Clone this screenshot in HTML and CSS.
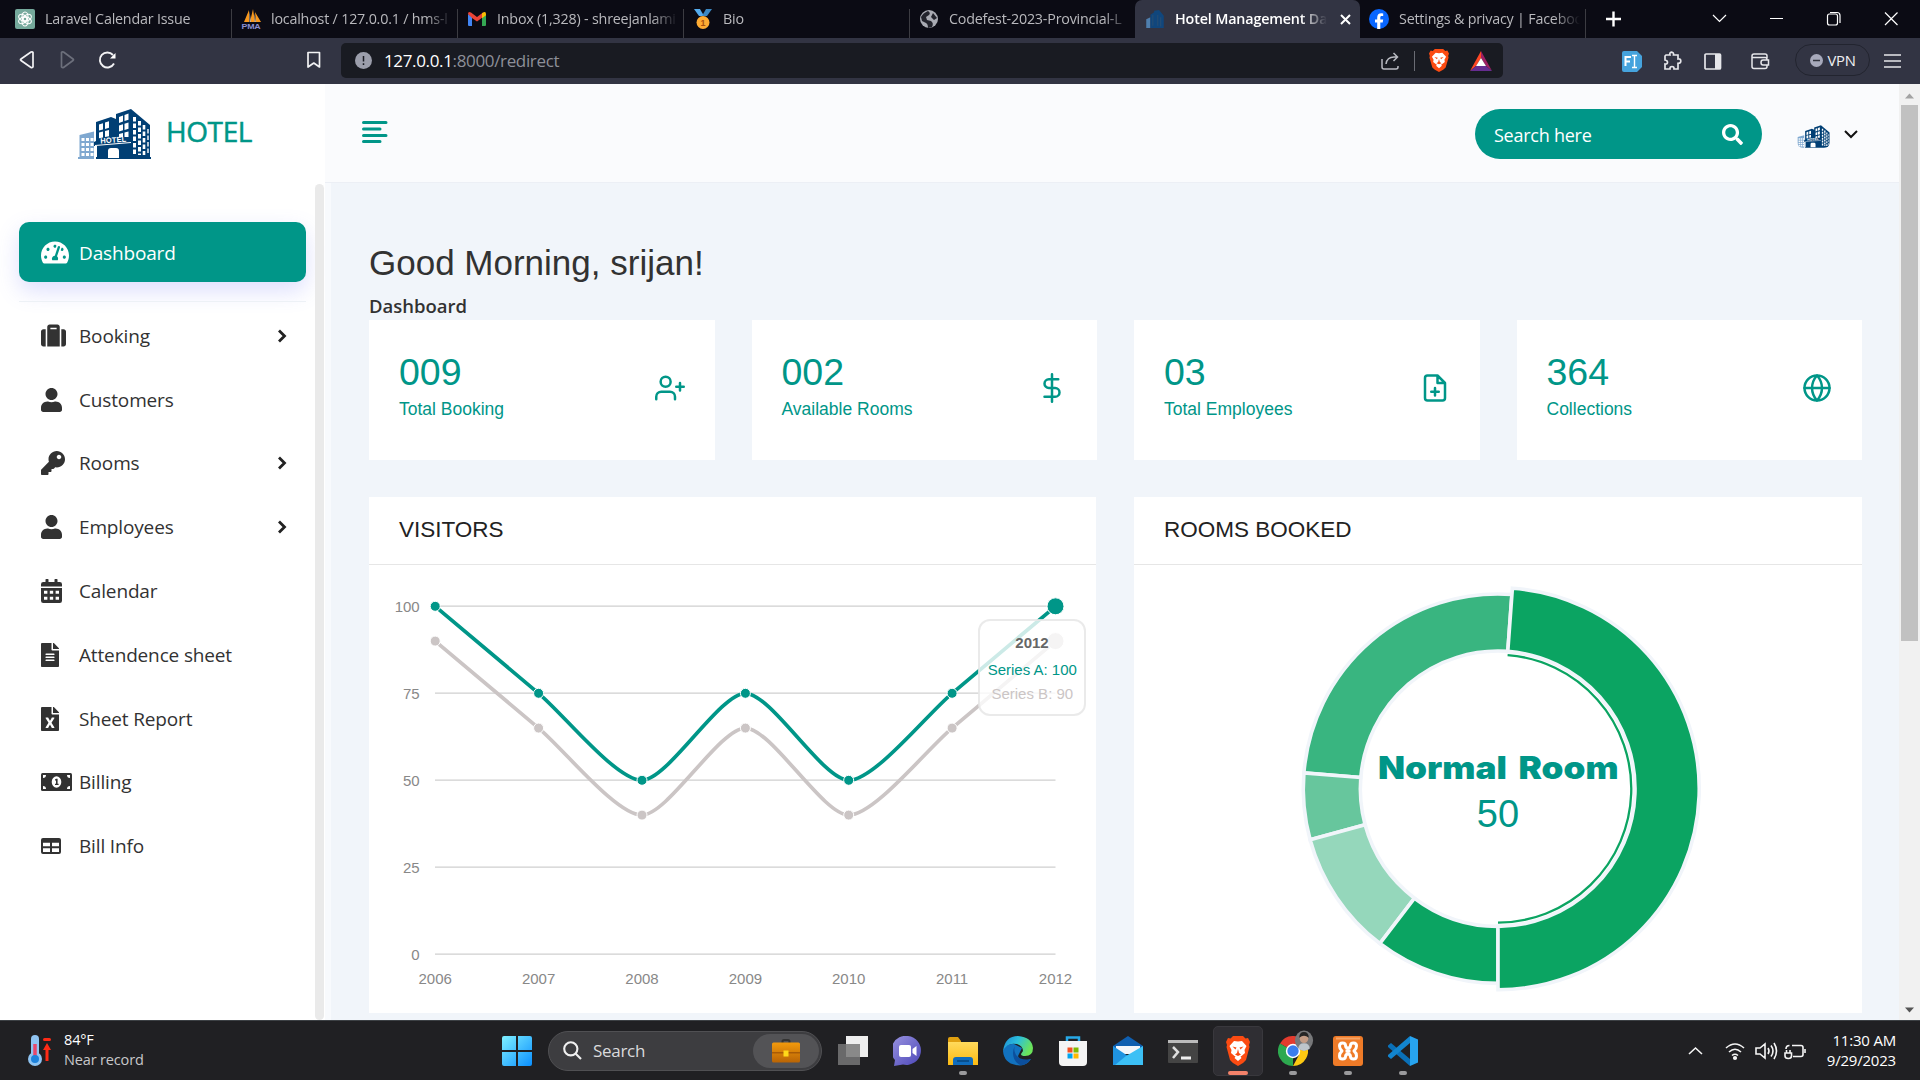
FILE: index.html
```html
<!DOCTYPE html>
<html lang="en">
<head>
<meta charset="utf-8">
<title>Hotel Management Dashboard</title>
<link rel="stylesheet" href="styles.css">
</head>
<body>
<svg class="defs" width="0" height="0">
  <defs>
    <symbol id="hotel" viewBox="0 0 73 50">
      <path fill="#7fa8d0" d="M0 48h16v2H0zM1.500 26 16 22.500V49H1.500z"/>
      <path fill="#fff" d="M3.500 29h3v3h-3zm4.500 0h3v3H8zm4.500 0h3v3h-3zM3.500 34h3v3h-3zM8 34h3v3H8zm4.500 0h3v3h-3zM3.500 39h3v3h-3zM8 39h3v3H8zm4.500 0h3v3h-3zM3.500 44h3v3h-3zM8 44h3v3H8zm4.500 0h3v3h-3z"/>
      <path fill="#013f74" d="M18 48h55v2H18zM18 13 33 8l5 2V5L53 0l19 16v33H19V37h-3v-4l2-1z"/>
      <path fill="#fff" d="M21 15.500l4-1.300v6.300l-4 1zM27 13.500l4-1.300v6.500l-4 1.200zM21 23.500l4-1v6l-4 .8zM27 22l4-1v6.200l-4 .8zM41 8l4-1.500v6L41 14zM46.500 6l4-1.500v6.300l-4 1.300zM41 16.500l4-1.300v6L41 22.500zM46.500 14.700l4-1.300v6.400l-4 1.200zM41 25l4-1v4l-4 .5zM46.500 23.500l4-1V28h-4zM30 49v-7q0-3 3-3h5q3 0 3 3v7z"/>
      <path stroke="#fff" stroke-width="3" stroke-dasharray="4.500 2" d="M56.500 8v38M61.500 12v34"/><path stroke="#fff" stroke-width="2.600" stroke-dasharray="4.500 2" d="M66 16v30"/><path stroke="#fff" stroke-width="1.400" d="M70 20v26" stroke-dasharray="4.500 2"/>
      <path stroke="#fff" stroke-width="1" d="M17 36.500 53 33.500"/>
      <text x="22.500" y="34.500" transform="rotate(-4 22 35)" font-family="Liberation Sans, Arial, sans-serif" font-weight="700" font-size="7.500" textLength="26" fill="#fff">HOTEL</text>
    </symbol>
    <symbol id="brave" viewBox="0 0 24 30">
      <path fill="#fb4b12" d="M7 0h10l2.500 2.500L22 2l2 4-1 3 .5 2L20 24l-3 3-5 3-5-3-3-3L.5 11 1 9 0 6l2-4 2.500.5z"/>
      <path fill="#fff" d="M12 5.500 16 5l4.500 5-2 4 .500 3-3.500 3-1 .5 1 1.500L12 25l-3.500-3 1-1.500-1-.5L5 17l.5-3-2-4L8 5z"/>
      <path fill="#fb4b12" d="m6.500 10.500 4 1-1 2zm11 0-4 1 1 2zM12 13l1 4 2 1.500-3 1.500-3-1.500 2-1.500z"/>
    </symbol>
    <symbol id="user" viewBox="0 0 448 512"><path d="M224 256c70.700 0 128-57.300 128-128S294.700 0 224 0 96 57.300 96 128s57.300 128 128 128zm89.600 32h-16.700c-22.200 10.200-46.900 16-72.900 16s-50.600-5.800-72.900-16h-16.700C60.200 288 0 348.200 0 422.400V464c0 26.500 21.500 48 48 48h352c26.500 0 48-21.500 48-48v-41.600c0-74.200-60.200-134.400-134.400-134.400z"/></symbol>
    <symbol id="chev" viewBox="0 0 10 14"><path d="m2 1.500 5.500 5.500L2 12.500" fill="none" stroke="#222" stroke-width="2.800"/></symbol>
    <linearGradient id="win" x2="1" y2="1"><stop stop-color="#7ff0ff"/><stop offset="1" stop-color="#0a8fff"/></linearGradient>
    <linearGradient id="edge" x2="1" y2="0.400"><stop stop-color="#1b87d6"/><stop offset="0.500" stop-color="#2cc0dc"/><stop offset="1" stop-color="#6be35a"/></linearGradient>
    <linearGradient id="purple" x2="1" y2="1"><stop stop-color="#9a94e0"/><stop offset="1" stop-color="#4b46b8"/></linearGradient>
    <linearGradient id="fold" y2="1" x2="0"><stop stop-color="#ffda5c"/><stop offset="1" stop-color="#fcba12"/></linearGradient>
    <linearGradient id="case" y2="1" x2="0"><stop stop-color="#f29a0c"/><stop offset="1" stop-color="#b96405"/></linearGradient>
  </defs>
</svg>

<div class="tabs">
  <div class="tab"><svg width="20" height="20" viewBox="0 0 20 20"><rect width="20" height="20" rx="2" fill="#75a99c"/><g fill="none" stroke="#fff" stroke-width="1.100"><ellipse cx="10" cy="7.500" rx="3" ry="4.500"/><ellipse cx="10" cy="7.500" rx="3" ry="4.500" transform="rotate(60 10 10)"/><ellipse cx="10" cy="7.500" rx="3" ry="4.500" transform="rotate(120 10 10)"/><ellipse cx="10" cy="7.500" rx="3" ry="4.500" transform="rotate(180 10 10)"/><ellipse cx="10" cy="7.500" rx="3" ry="4.500" transform="rotate(240 10 10)"/><ellipse cx="10" cy="7.500" rx="3" ry="4.500" transform="rotate(300 10 10)"/></g></svg><span>Laravel Calendar Issue</span></div>
  <div class="tab"><svg width="20" height="20" viewBox="0 0 20 20"><path fill="#f8981d" d="M8 1 3 13h5zM12 0 9 13h5zM14 3l1 10h5z"/><path fill="#cbb9a5" d="M8.500 2v11H10zM13.500 4v9h1.500z"/><text x="0.500" y="19.500" font-family="Liberation Sans, Arial, sans-serif" font-weight="700" font-size="8" textLength="19" lengthAdjust="spacingAndGlyphs" fill="#8a8fd0">PMA</text></svg><span>localhost / 127.0.0.1 / hms-l</span></div>
  <div class="tab"><svg width="20" height="20" viewBox="0 0 20 20"><path fill="#4285f4" d="M1 5l4 3v9H2q-1 0-1-1z"/><path fill="#34a853" d="M15 8l4-3v11q0 1-1 1h-3z"/><path fill="#ea4335" d="M1 5q0-3 3-1.500l6 4.500 6-4.500V8l-6 4.500L5 9z"/><path fill="#fbbc04" d="M15 4.200q4-3 4 1v1l-4 3z"/></svg><span>Inbox (1,328) - shreejanlami</span></div>
  <div class="tab"><svg width="20" height="20" viewBox="0 0 20 20"><path fill="#55acee" d="M1 0h6l4 7H6z"/><path fill="#3b88c3" d="M13 0h6l-5 7H9z"/><circle cx="10" cy="13.500" r="6.500" fill="#ffac33"/><text x="10" y="17" text-anchor="middle" font-family="Liberation Sans, Arial, sans-serif" font-weight="700" font-size="9" fill="#a8500f">1</text></svg><span>Bio</span></div>
  <div class="tab"><svg width="20" height="20" viewBox="0 0 20 20"><circle cx="10" cy="10" r="9" fill="#a9abb3"/><path fill="#0b0b14" d="M2 8q2-4 7-6 3 2 1 4L7 8l1 3 4 1q3 2 1 6l-4 1q0-4-2-5l-4-2zM14 4l4 5-3 2-3-3z" opacity=".85"/></svg><span>Codefest-2023-Provincial-L</span></div>
  <div class="tab active"><svg width="18" height="18" viewBox="0 0 73 50" preserveAspectRatio="none"><path fill="#4f7fae" d="M1 26 18 20v30H1z"/><path fill="#10467c" d="M18 13 33 6V2L53 0l19 16v34H18z"/><path stroke="#32516f" stroke-width="3" d="M28 14v30M48 14v30M60 20v26"/></svg><span>Hotel Management Da</span><svg class="x" width="11" height="11" viewBox="0 0 11 11"><path d="m1 1 9 9m0-9-9 9" stroke="#fff" stroke-width="2"/></svg></div>
  <div class="tab"><svg width="20" height="20" viewBox="0 0 20 20"><circle cx="10" cy="10" r="10" fill="#0866ff"/><path fill="#fff" d="M8.200 20v-6.500H6v-3h2.200V8.700c0-3 1.500-4.400 4.200-4.400l1.800.2v2.600h-1.400c-1.200 0-1.500.6-1.500 1.500v1.900h2.900l-.5 3h-2.400V20z"/></svg><span>Settings &amp; privacy | Facebook</span></div>
  <svg class="wctl" width="334" height="38" viewBox="1586 0 334 38" fill="none" stroke="#fff"><path d="M1606 19h15M1613.500 11.500v15" stroke-width="2.400"/><path d="m1713 15 6.500 6.500L1726 15M1770 18.500h13M1885 12.500l12.500 12.500m0-12.500L1885 25" stroke-width="1.200"/><rect x="1827.500" y="14" width="10" height="11" rx="2" stroke-width="1.200"/><path d="M1830 12.500h7q3 0 3 3V23" stroke-width="1.200"/></svg>
</div>

<div class="toolbar">
  <svg width="341" height="46" viewBox="0 38 341 46" fill="none" stroke="#f2f2f4" stroke-width="1.700" stroke-linejoin="round"><path d="M33 52.500v14.500q-1 1-2 .5L21 60.500q-1-1 0-1.500l10-7q1.500-.5 2 .5z"/><path stroke="#6c6f7b" d="M61.500 52.500v14.500q1 1 2 .5l9.500-7q1-.7 0-1.500l-9.500-7q-1.500-.5-2 .5z"/><path d="M114 63.500a7.500 7.500 0 1 1-1-8.500" stroke-width="1.900"/><path d="M110 58.500h5.500V53z" fill="#fff" stroke="none"/><path d="M308 52.500h11.500V67l-5.700-4-5.800 4z"/></svg>
  <div class="url">
    <svg width="17" height="17" viewBox="0 0 17 17"><circle cx="8.500" cy="8.500" r="8.500" fill="#9b9eab"/><path d="M8.500 4v5.500m0 1.800v1.700" stroke="#191b22" stroke-width="1.500"/></svg>
    <span class="addr"><b>127.0.0.1</b>:8000/redirect</span>
    <svg width="18" height="18" viewBox="0 0 18 18" fill="none" stroke="#b9bbc2" stroke-width="1.500"><path d="M1 7v8q0 2 2 2h12q2 0 2-2v-1M5 12q1-7 8-7h3M12.500 1l4 4-4 4"/></svg>
    <i></i>
    <svg width="20" height="23" viewBox="0 0 24 30" preserveAspectRatio="none"><use href="#brave" width="24" height="30"/></svg>
    <svg class="bat" width="22" height="20" viewBox="0 0 22 20"><path fill="#ff4724" d="M11 0v7l-5 8-6 5z"/><path fill="#9e1f63" d="m11 0 11 20-6-5-5-8z"/><path fill="#662d91" d="m0 20 6-5h10l6 5z"/><path fill="#fff" d="m11 7 5 8H6z"/></svg>
  </div>
  <div class="ext">
    <svg width="20" height="21" viewBox="0 0 20 21"><path fill="#46a3dd" d="M2 0h13l5 5v11l-5 5H2q-2 0-2-2V2q0-2 2-2z"/><path d="M3.500 15V6H9M3.500 10.500H8" stroke="#fff" stroke-width="2" fill="none"/><path d="M10 4.500h5M10 16.500h5M12.500 4.500v12" stroke="#fff" stroke-width="1.400"/></svg>
    <svg width="20" height="20" viewBox="0 0 20 20" fill="none" stroke="#e6e6ea" stroke-width="1.700"><path d="M3 4h4q-.8-2.500 1.500-2.800Q11 1.500 10.500 4H15v4q2.800-.4 2.800 2T15 12.300V18h-4q.2-2.500-2-2.500T7 18H2v-5q2.500.2 2.500-1.700T2 9V5z"/></svg>
    <svg width="18" height="17" viewBox="0 0 18 17"><rect x="1" y="1" width="15.500" height="15" rx="1" fill="none" stroke="#e6e6ea" stroke-width="1.700"/><path fill="#e6e6ea" d="M11 1h6v15h-6z"/></svg>
    <svg class="wal" width="19" height="17" viewBox="0 0 19 17" fill="none" stroke="#e6e6ea" stroke-width="1.500"><path d="M16 5V3q0-2-2-2H3Q1 1 1 3v10.500q0 2 2 2h11q2 0 2-2V12M1 4.500h13q2 0 2 2M17.500 7v5H12q-2 0-2-2.500T12 7z"/></svg>
    <div class="vpn"><svg width="13" height="13" viewBox="0 0 13 13"><circle cx="6.500" cy="6.500" r="6.500" fill="#a7a9bb"/><path d="M3 6.500h7" stroke="#32343f" stroke-width="1.500"/></svg>VPN</div>
    <svg width="17" height="14" viewBox="0 0 17 14"><path d="M0 1h17M0 7h17M0 13h17" stroke="#e6e6ea" stroke-width="1.500"/></svg>
  </div>
</div>

<div class="page">
  <aside>
    <div class="brand"><svg width="73" height="50"><use href="#hotel"/></svg><span>HOTEL</span></div>
    <div class="side">
      <nav>
        <a class="on"><svg width="28" height="25" viewBox="0 0 576 512" fill="#fff"><path d="M288 32C128.940 32 0 160.940 0 320c0 52.800 14.250 102.260 39.060 144.800 5.610 9.620 16.300 15.200 27.440 15.200h443c11.140 0 21.830-5.580 27.440-15.200C561.750 422.260 576 372.800 576 320c0-159.060-128.940-288-288-288zm0 64c14.710 0 26.580 10.130 30.320 23.650-1.110 2.260-2.640 4.230-3.450 6.670l-9.220 27.670c-5.130 3.490-10.970 6.010-17.640 6.010-17.670 0-32-14.330-32-32S270.330 96 288 96zM96 384c-17.670 0-32-14.330-32-32s14.330-32 32-32 32 14.330 32 32-14.330 32-32 32zm48-160c-17.670 0-32-14.330-32-32s14.330-32 32-32 32 14.330 32 32-14.330 32-32 32zm246.770-72.410l-61.330 184C343.130 347.330 352 364.540 352 384c0 11.720-3.380 22.550-8.880 32H232.880c-5.500-9.450-8.880-20.280-8.880-32 0-33.940 26.500-61.430 59.900-63.590l61.340-184.010c4.170-12.560 17.730-19.450 30.360-15.170 12.570 4.190 19.350 17.790 15.170 30.360zm14.660 57.200l15.520-46.550c3.470-1.290 7.130-2.230 11.050-2.230 17.670 0 32 14.330 32 32s-14.330 32-32 32c-11.380-.01-20.890-6.280-26.570-15.220zM480 384c-17.670 0-32-14.330-32-32s14.330-32 32-32 32 14.330 32 32-14.330 32-32 32z"/></svg><span>Dashboard</span></a>
        <hr>
        <a><svg width="25" height="25" viewBox="0 0 512 512"><path d="M128 480h256V80c0-26.500-21.500-48-48-48H176c-26.500 0-48 21.500-48 48v400zm64-384h128v32H192V96zm320 80v256c0 26.500-21.500 48-48 48h-48V128h48c26.500 0 48 21.500 48 48zM96 480H48c-26.500 0-48-21.500-48-48V176c0-26.500 21.500-48 48-48h48v352z"/></svg><span>Booking</span><svg width="10" height="14"><use href="#chev"/></svg></a>
        <a><svg width="21" height="24"><use href="#user"/></svg><span>Customers</span></a>
        <a><svg width="24" height="24" viewBox="0 0 512 512"><path d="M512 176.001C512 273.203 433.202 352 336 352c-11.220 0-22.190-1.062-32.827-3.069l-24.012 27.014A23.999 23.999 0 0 1 261.223 384H224v40c0 13.255-10.745 24-24 24h-40v40c0 13.255-10.745 24-24 24H24c-13.255 0-24-10.745-24-24v-78.059c0-6.365 2.529-12.470 7.029-16.971l161.802-161.802C163.108 213.814 160 195.271 160 176 160 78.798 238.797.001 335.999 0 433.488-.001 512 78.511 512 176.001zM336 128c0 26.510 21.490 48 48 48s48-21.490 48-48-21.490-48-48-48-48 21.490-48 48z"/></svg><span>Rooms</span><svg width="10" height="14"><use href="#chev"/></svg></a>
        <a><svg width="21" height="24"><use href="#user"/></svg><span>Employees</span><svg width="10" height="14"><use href="#chev"/></svg></a>
        <a><svg width="21" height="24" viewBox="0 0 448 512"><path fill-rule="evenodd" d="M0 464q0 48 48 48h352q48 0 48-48V192H0zM64 250h72v64H64zm124 0h72v64h-72zm124 0h72v64h-72zM64 378h72v64H64zm124 0h72v64h-72zm124 0h72v64h-72zM448 160H0v-48q0-48 48-48h48V12q0-12 12-12h40q12 0 12 12v52h128V12q0-12 12-12h40q12 0 12 12v52h48q48 0 48 48z"/></svg><span>Calendar</span></a>
        <a><svg width="18" height="24" viewBox="0 0 384 512"><path d="M224 136V0H24C10.700 0 0 10.700 0 24v464c0 13.300 10.700 24 24 24h336c13.300 0 24-10.700 24-24V160H248c-13.200 0-24-10.800-24-24zm64 236c0 6.600-5.400 12-12 12H108c-6.600 0-12-5.400-12-12v-8c0-6.600 5.400-12 12-12h168c6.600 0 12 5.400 12 12v8zm0-64c0 6.600-5.400 12-12 12H108c-6.600 0-12-5.400-12-12v-8c0-6.600 5.400-12 12-12h168c6.600 0 12 5.400 12 12v8zm0-72v8c0 6.600-5.400 12-12 12H108c-6.600 0-12-5.400-12-12v-8c0-6.600 5.400-12 12-12h168c6.600 0 12 5.400 12 12zm96-114.100v6.100H256V0h6.100c6.400 0 12.500 2.500 17 7l97.900 98c4.500 4.500 7 10.600 7 16.900z"/></svg><span>Attendence sheet</span></a>
        <a><svg width="18" height="24" viewBox="0 0 384 512"><path d="M224 136V0H24C10.700 0 0 10.700 0 24v464c0 13.300 10.700 24 24 24h336c13.300 0 24-10.700 24-24V160H248c-13.200 0-24-10.800-24-24zm60.100 106.500L224 336l60.100 93.500c5.100 8-.6 18.500-10.100 18.500h-34.900c-4.400 0-8.500-2.400-10.600-6.300C208.900 405.500 192 373 192 373c-6.400 14.800-10 20-36.600 68.800-2.100 3.900-6.100 6.300-10.500 6.300H110c-9.500 0-15.200-10.500-10.100-18.500l60.300-93.500-60.300-93.500c-5.200-8 .6-18.500 10.100-18.500h34.800c4.400 0 8.500 2.400 10.600 6.300 26.100 48.800 20 33.600 36.600 68.500 0 0 6.100-11.700 36.600-68.500 2.100-3.900 6.200-6.300 10.600-6.300H274c9.500-.1 15.200 10.400 10.100 18.400zM384 121.900v6.100H256V0h6.100c6.400 0 12.500 2.500 17 7l97.900 98c4.500 4.500 7 10.600 7 16.900z"/></svg><span>Sheet Report</span></a>
        <a><svg width="31" height="18" viewBox="0 0 31 18"><rect width="31" height="18" rx="1.500"/><ellipse cx="15.500" cy="9" rx="4.800" ry="5.800" fill="#fff"/><path d="M14 6.500l1-.7h1.600v5h1V12H14v-1.200h1V7.500h-1z"/><path fill="#fff" d="M2 2h3q0 3-3 3zM29 2h-3q0 3 3 3zM2 16h3q0-3-3-3zM29 16h-3q0-3 3-3z"/></svg><span>Billing</span></a>
        <a><svg width="20" height="16" viewBox="0 0 20 16"><path fill-rule="evenodd" d="M2 0h16q2 0 2 2v12q0 2-2 2H2q-2 0-2-2V2q0-2 2-2zm0 4.700v3.500h7V4.700zm9 0v3.500h7V4.700zM2 10.300V14h7v-3.700zm9 0V14h7v-3.700z"/></svg><span>Bill Info</span></a>
      </nav>
      <div class="thumb"></div>
    </div>
  </aside>
  <div class="main">
    <header>
      <svg width="26" height="24" viewBox="0 0 26 24"><path d="M1.500 2.500H24M1.500 9H18M1.500 15.500H24M1.500 21.500H18" stroke="#009688" stroke-width="3" stroke-linecap="round"/></svg>
      <div class="find"><span>Search here</span><svg width="21" height="21" viewBox="0 0 512 512" fill="#fff"><path d="M505 442.700L405.300 343c-4.500-4.500-10.600-7-17-7H372c27.600-35.300 44-79.700 44-128C416 93.100 322.900 0 208 0S0 93.100 0 208s93.100 208 208 208c48.300 0 92.700-16.400 128-44v16.300c0 6.400 2.500 12.500 7 17l99.700 99.700c9.400 9.400 24.600 9.400 33.900 0l28.300-28.300c9.400-9.400 9.400-24.600.1-34zM208 336c-70.700 0-128-57.200-128-128 0-70.700 57.200-128 128-128 70.700 0 128 57.200 128 128 0 70.700-57.200 128-128 128z"/></svg></div>
      <svg class="ava" width="33" height="23"><use href="#hotel"/></svg>
      <svg class="down" width="14" height="9" viewBox="0 0 14 9"><path d="m1 1 6 6 6-6" fill="none" stroke="#111" stroke-width="2"/></svg>
    </header>
    <div class="content">
      <h1>Good Morning, srijan!</h1>
      <h2>Dashboard</h2>
      <div class="stats">
        <div class="card"><div><strong>009</strong><small>Total Booking</small></div><svg viewBox="0 0 24 24"><path d="M16 21v-2a4 4 0 0 0-4-4H5a4 4 0 0 0-4 4v2"/><circle cx="8.500" cy="7" r="4"/><path d="M20 8v6M23 11h-6"/></svg></div>
        <div class="card"><div><strong>002</strong><small>Available Rooms</small></div><svg viewBox="0 0 24 24"><path d="M12 1v22M17 5H9.500a3.500 3.500 0 0 0 0 7h5a3.500 3.500 0 0 1 0 7H6"/></svg></div>
        <div class="card"><div><strong>03</strong><small>Total Employees</small></div><svg viewBox="0 0 24 24"><path d="M14 2H6a2 2 0 0 0-2 2v16a2 2 0 0 0 2 2h12a2 2 0 0 0 2-2V8zM14 2v6h6M12 18v-6M9 15h6"/></svg></div>
        <div class="card"><div><strong>364</strong><small>Collections</small></div><svg viewBox="0 0 24 24"><circle cx="12" cy="12" r="10"/><path d="M2 12h20M12 2a15.300 15.300 0 0 1 4 10 15.300 15.300 0 0 1-4 10 15.300 15.300 0 0 1-4-10 15.300 15.300 0 0 1 4-10z"/></svg></div>
      </div>
      <div class="charts">
        <section><h3>VISITORS</h3>
          <svg width="727" height="448" viewBox="369 565 727 448">
            <path d="M435 606.200h620.500M435 693.200h620.500M435 780.200h620.500M435 867.200h620.500M435 954.200h620.500" stroke="#cfcfcf" stroke-width="1.300"/>
            <g class="ax end"><text x="419.700" y="612">100</text><text x="419.700" y="699">75</text><text x="419.700" y="786">50</text><text x="419.700" y="873">25</text><text x="419.700" y="960">0</text></g>
            <g class="ax mid"><text x="435.200" y="984">2006</text><text x="538.600" y="984">2007</text><text x="642" y="984">2008</text><text x="745.400" y="984">2009</text><text x="848.700" y="984">2010</text><text x="952.100" y="984">2011</text><text x="1055.500" y="984">2012</text></g>
            <path class="ln" stroke="#cbc5c5" d="M435.200 641.100 538.600 728.100C564.450 749.850 616.150 815.100 642 815.100S719.550 728.100 745.400 728.100 822.850 815.100 848.700 815.100 926.250 749.850 952.100 728.100L1055.500 641.100"/>
            <path class="ln" stroke="#009688" d="M435.200 606.300 538.600 693.300C564.450 715.050 616.150 780.300 642 780.300S719.550 693.300 745.400 693.300 822.850 780.300 848.700 780.300 926.250 715.050 952.100 693.300L1055.500 606.300"/>
            <g fill="#cbc5c5" stroke="#fff"><circle cx="435.200" cy="641.100" r="5"/><circle cx="538.600" cy="728.100" r="5"/><circle cx="642" cy="815.100" r="5"/><circle cx="745.400" cy="728.100" r="5"/><circle cx="848.700" cy="815.100" r="5"/><circle cx="952.100" cy="728.100" r="5"/><circle cx="1055.500" cy="641.100" r="8.500"/></g>
            <g fill="#009688" stroke="#fff"><circle cx="435.200" cy="606.300" r="5"/><circle cx="538.600" cy="693.300" r="5"/><circle cx="642" cy="780.300" r="5"/><circle cx="745.400" cy="693.300" r="5"/><circle cx="848.700" cy="780.300" r="5"/><circle cx="952.100" cy="693.300" r="5"/><circle cx="1055.500" cy="606.300" r="8.500"/></g>
            <rect x="979" y="620" width="106" height="95" rx="11" fill="#fff" fill-opacity=".8" stroke="#e6e6e6" stroke-opacity=".85" stroke-width="2"/>
            <g class="mid tip"><text x="1032" y="648" font-weight="700" fill="#666">2012</text><text x="1032.300" y="675" fill="#009688">Series A: 100</text><text x="1032.300" y="699" fill="#cbc5c5">Series B: 90</text></g>
          </svg>
        </section>
        <section><h3>ROOMS BOOKED</h3>
          <svg width="728" height="448" viewBox="1134 565 728 448">
            <g transform="translate(1498 788.700)" stroke="#f1f5fa" stroke-width="3.600">
              <path fill="#39b580" d="M9.800-137.300 13.900-194.200A194.700 194.700 0 0 0-194.100-15.800L-137.200-11.200A137.700 137.700 0 0 1 9.800-137.300z"/>
              <path fill="#67c69d" d="M-137.200-11.200-194.100-15.800A194.700 194.700 0 0 0-187.900 51.100L-132.900 36.100A137.700 137.700 0 0 1-137.200-11.200z"/>
              <path fill="#95d7bb" d="M-132.900 36.100-187.900 51.100A194.700 194.700 0 0 0-118.100 154.800L-83.500 109.500A137.700 137.700 0 0 1-132.900 36.100z"/>
              <path fill="#0ba462" d="M-83.500 109.500-118.100 154.800A194.700 194.700 0 0 0 0 194.700L0 137.700A137.700 137.700 0 0 1-83.500 109.500z"/>
              <path fill="#0ba462" d="M0 137.700V201A201 201 0 0 0 14.400-200.500L9.800-137.300A137.700 137.700 0 0 1 0 137.700z"/>
              <path fill="none" stroke="#0ba462" stroke-width="2.300" d="M0 134A134 134 0 0 0 9.600-133.600"/>
            </g>
            <text class="big" x="1378" y="778.500" textLength="129" lengthAdjust="spacingAndGlyphs">Normal</text>
            <text class="big" x="1518.500" y="778.500" textLength="100" lengthAdjust="spacingAndGlyphs">Room</text>
            <text class="num" x="1498" y="826.700">50</text>
          </svg>
        </section>
      </div>
    </div>
  </div>
  <div class="scroll"><svg width="9" height="6" viewBox="0 0 9 6"><path fill="#a3a3a3" d="m0 5.500 4.500-5 4.500 5z"/></svg><div></div><svg class="dn" width="9" height="6" viewBox="0 0 9 6"><path fill="#555" d="M0 .5h9l-4.500 5z"/></svg></div>
</div>

<div class="taskbar">
  <svg width="26" height="32" viewBox="0 0 26 32"><path d="M8 4v18" stroke="#8fc4f2" stroke-width="8" stroke-linecap="round"/><circle cx="8" cy="24" r="7" fill="#8fc4f2"/><path d="M8 9v14" stroke="#e8476a" stroke-width="3.500"/><circle cx="8" cy="24" r="4" fill="#1d82dc"/><path fill="#ff2b16" d="M16 4.500q0-1.500 1.500-1.500h5q1.500 0 1.500 1.500T22.500 6h-5Q16 6 16 4.500zM20 8l4 7h-2.500v11h-3V15H16z"/></svg>
  <div class="wx"><b>84°F</b><span>Near record</span></div>
  <svg width="30" height="30" viewBox="0 0 30 30"><path fill="url(#win)" d="M2 0h12v14H0V2q0-2 2-2zm14 0h12q2 0 2 2v12H16zM0 16h14v14H2q-2 0-2-2zm16 0h14v12q0 2-2 2H16z"/></svg>
  <div class="srch"><svg width="19" height="19" viewBox="0 0 19 19" fill="none" stroke="#f0f0f0" stroke-width="2.100"><circle cx="7.800" cy="7.800" r="6.600"/><path d="m12.500 12.500 5.500 5.500"/></svg><span>Search</span><div><svg width="28" height="24" viewBox="0 0 28 24"><path d="M10.500 4V2.500Q10.500 1 12 1h4q1.500 0 1.500 1.500V4" fill="none" stroke="#333" stroke-width="2"/><rect y="3.500" width="28" height="20" rx="1.500" fill="url(#case)"/><path fill="#a85b06" d="M0 13h28v1.500H0z"/><rect x="11.500" y="11.500" width="5" height="6" fill="#ffd91a"/></svg></div></div>
  <div class="apps">
    <div><svg viewBox="0 0 30 30"><path fill="#eee" d="M8 0h22v21H8z"/><path fill="#777" fill-opacity=".85" d="M0 8h22v21H0z"/></svg></div>
    <div><svg viewBox="0 0 30 30"><path fill="url(#purple)" d="M15 0a14.500 14.500 0 1 1-5 28.500L1 30l1-6A14.500 14.500 0 0 1 15 0z"/><rect x="6" y="9" width="12" height="12" rx="2" fill="#fff"/><path fill="#fff" d="m19.500 13 4-3v10l-4-3z"/></svg></div>
    <div class="run"><svg viewBox="0 0 30 30"><path fill="#e0a010" d="M0 3q0-2 2-2h8l3 4v5H0z"/><path fill="url(#fold)" d="M0 6h30v23H0z"/><path fill="#0f6cbd" d="M5 29v-5q0-3 3-3h14q3 0 3 3v5z"/><path d="M9 25h12" stroke="#06467f" stroke-width="1.500"/></svg></div>
    <div><svg viewBox="0 0 30 30"><path fill="#1272bf" d="M0 15Q2 7 11 8l8 4-4 8q2 7 13 3-5 8-15 6Q1 27 0 15z"/><path fill="url(#edge)" d="M0 15Q2 0 15 0q14 1 15 12 0 8-8 8-4 0-4-2l2-3q0-5-6-7Q4 6 0 15z"/><path fill="#0c4f9c" d="M10 17q0-6 4-8-5 2-1 10 5 6 15 4-5 7-11 6-7-4-7-12z"/></svg></div>
    <div><svg viewBox="0 0 30 30"><path d="M9 6V1.500h12V6" fill="none" stroke="#27a9e8" stroke-width="2.500"/><path fill="#f4f4f4" d="M1 5h28v21q0 4-4 4H5q-4 0-4-4z"/><path fill="#f25022" d="M9.500 11.500h5v5h-5z"/><path fill="#7fba00" d="M15.500 11.500h5v5h-5z"/><path fill="#00a4ef" d="M9.500 17.500h5v5h-5z"/><path fill="#ffb900" d="M15.500 17.500h5v5h-5z"/></svg></div>
    <div><svg viewBox="0 0 30 30"><path fill="#0f5fb0" d="m15 0 15 10v5H0v-5z"/><path fill="#f3f6fa" d="M3 10h24v8H3z"/><path fill="#1f93e0" d="m0 10 15 10v9H0z"/><path fill="#3cc0f5" d="M30 10 13 20l-11 9h28z"/></svg></div>
    <div><svg viewBox="0 0 30 30"><path fill="#444" d="M0 5h30v21q0 1-1 1H1q-1 0-1-1z"/><path fill="#bbb" d="M0 4h30v3H0z"/><path d="m5 11 5 5-5 6" fill="none" stroke="#ddd" stroke-width="2.500"/><path d="M13 22h10" stroke="#eee" stroke-width="3"/></svg></div>
    <div class="cur"><svg viewBox="0 0 30 30"><use href="#brave" x="3" width="24" height="30"/></svg></div>
    <div class="run"><svg viewBox="0 0 30 30"><path fill="#e33b2e" d="M15 15 2 7.500a15 15 0 0 1 26 0z"/><path fill="#2da94f" d="M15 15v15A15 15 0 0 1 2 7.500z"/><path fill="#fdc912" d="M15 15l13-7.500A15 15 0 0 1 15 30l6-11z"/><circle cx="15" cy="15" r="7.200" fill="#fff"/><circle cx="15" cy="15" r="5.700" fill="#3b7ded"/></svg><svg class="face" viewBox="0 0 20 22"><ellipse cx="10" cy="11" rx="9.500" ry="10.500" fill="#77787a"/><circle cx="10" cy="9" r="4.500" fill="#c49c85"/><path fill="#252525" d="M5 8q0-6 5-6t5 6q-5-4-10 0z"/><path fill="#bdc5cb" d="M4 20q0-6 6-6t6 6l-6 2z"/></svg></div>
    <div class="run"><svg viewBox="0 0 30 30"><rect width="30" height="30" rx="3" fill="#ef7b28"/><path fill="#f7a566" d="M3 1.500h24v2H3z"/><path d="M12.500 15h5M12.500 9.500q0-2.500-3-2.500T6.500 10 9 15q-2.500 2-2.500 5t3 3 3-2.500M17.500 9.500q0-2.500 3-2.500t3 3-2.500 5q2.500 2 2.500 5t-3 3-3-2.500M12.500 9q0 3 2.500 3t2.500-3M12.500 21q0-3 2.500-3t2.500 3" fill="none" stroke="#fff" stroke-width="3" stroke-linejoin="round"/></svg></div>
    <div class="run"><svg viewBox="0 0 30 30"><path fill="#0a70b8" d="M0 9.500 3 7l19 16v7L0 11z"/><path fill="#1285cf" d="M0 20.500 3 23 22 7V0L0 19z"/><path fill="#27a4f0" d="m22 0 8 3.500v23L22 30z"/></svg></div>
  </div>
  <svg class="tray" width="130" height="30" viewBox="1688 1035 130 30" fill="none" stroke="#f5f5f5" stroke-width="1.600"><path d="m1690 1053 6.500-6 6.500 6"/><path d="M1727 1047q9-8 18 0M1730 1051q6-5.500 12 0M1733 1054.500q3-2.500 6 0"/><circle cx="1736" cy="1057" r="1.300" fill="#fff"/><path d="M1757 1047h4l5-4v14l-5-4h-4zM1769 1047q2 3 0 6M1772 1044.500q4 5.500 0 11M1775 1042q5 8 0 16"/><path d="M1793 1044.500h9q2 0 2 2v7q0 2-2 2h-8M1787 1048q0-3.500 3.500-3.500M1806 1048v4M1786 1052h6.500v3q0 2.500-3.200 2.500t-3.300-2.500zM1787.500 1049v3M1791 1049v3"/></svg>
  <div class="clock"><span>11:30 AM</span><span>9/29/2023</span></div>
</div>
</body>
</html>
```
FILE: styles.css
```css
* { box-sizing: border-box; }
body { margin: 0; width: 1920px; height: 1080px; overflow: hidden; display: flex; flex-direction: column; font-family: "Open Sans", "Noto Sans", sans-serif; color: #323232; }
.defs { position: absolute; }
svg { flex: none; display: block; }

.tabs { height: 38px; background: #0b0b14; display: flex; flex: none; }
.tab { flex: none; width: 226px; height: 38px; display: flex; align-items: center; padding-left: 9px; gap: 10px; font-size: 14.300px; letter-spacing: -.2px; color: #b9b9bd; position: relative; }
.tab::after { content: ""; position: absolute; right: 0; top: 9px; width: 1px; height: 29px; background: #3c3c42; }
.tab:first-child { width: 232px; padding-left: 15px; }
.tab span { flex: 1; height: 22px; line-height: 22px; overflow: hidden; white-space: nowrap; margin-right: 6px; -webkit-mask-image: linear-gradient(90deg, #000 calc(100% - 26px), transparent); mask-image: linear-gradient(90deg, #000 calc(100% - 26px), transparent); }
.tab.active { width: 225px; margin-left: -1px; padding-left: 11px; background: #323443; color: #fff; font-weight: 600; border-radius: 7px 7px 0 0; gap: 11px; letter-spacing: -.15px; }
.tab.active::after { display: none; }
.tab.active span { margin-right: 2px; }
.tab.active .x { margin-right: 9px; }
.wctl { margin-left: auto; }

.toolbar { height: 46px; flex: none; background: #323443; display: flex; align-items: center; }
.url { width: 1162px; height: 35px; margin-bottom: 1px; border-radius: 5px; background: #191b22; display: flex; align-items: center; padding-left: 14px; }
.addr { flex: 1; margin-left: 12px; font-size: 17px; letter-spacing: -.35px; color: #8d8f98; }
.addr b { font-weight: 400; color: #fff; }
.url i { width: 1px; height: 20px; margin: 0 14px 0 15px; background: #6a6c74; }
.bat { margin: 0 11px 0 21px; }
.ext { flex: 1; display: flex; align-items: center; padding-left: 119px; gap: 21px; }
.ext .wal { margin-left: 8px; }
.vpn { width: 75px; height: 32px; margin: 0 -7px 2px 4px; border: 1px solid #22242f; border-radius: 16px; display: flex; align-items: center; justify-content: center; gap: 5px; font-size: 14.800px; letter-spacing: -.3px; color: #f0f0f2; }

.page { height: 936px; flex: none; display: flex; background: #f1f5fa; }
aside { width: 325px; background: #fff; display: flex; flex-direction: column; }
.brand { height: 100px; display: flex; align-items: flex-start; padding: 25px 0 0 78px; gap: 15px; }
.brand span { font-size: 28px; line-height: 44px; letter-spacing: -.4px; color: #009688; -webkit-text-stroke: .5px #009688; }
.side { flex: 1; display: flex; }
nav { width: 315px; padding: 38px 9px 0 19px; }
nav a { height: 63.800px; display: grid; grid-template-columns: 38px 1fr 10px; align-items: center; padding: 0 19px 0 22px; font-size: 19px; letter-spacing: -.15px; fill: #323232; }
nav .on { height: 60px; border-radius: 10px; background: #009688; color: #fff; box-shadow: 0 9px 22px rgba(98, 111, 246, .22); }
nav .on span { padding-top: 1px; }
nav hr { border: 0; height: 1px; background: #edf1f6; margin: 19px 0 2px; }
.thumb { width: 9px; border-radius: 5px; background: #eaeaea; }
.main { width: 1574px; display: flex; flex-direction: column; }
header { height: 99px; flex: none; background: #fafbfd; border-bottom: 1px solid #eceff5; display: flex; align-items: center; padding-left: 37px; }
header > svg:first-child { margin-bottom: 3px; }
.find { margin-left: auto; width: 287px; height: 50px; border-radius: 25px; background: #009688; color: #fff; display: flex; align-items: center; justify-content: space-between; padding: 0 19px; font-size: 18px; letter-spacing: -.25px; margin-top: 1px; }
.find span { padding-top: 2px; }
.find svg { margin-top: 1px; }
.ava { margin: 6px 14px 0 35px; border-radius: 6px; }
.down { margin: 2px 41px 0 0; }
.content { flex: 1; border-left: 6px solid #f8fafd; padding: 58px 37px 0 38px; font-family: "Liberation Sans", Arial, sans-serif; display: flex; flex-direction: column; }
h1 { margin: 0; font-weight: 400; font-size: 35px; line-height: 44px; }
h2 { margin: 5px 0 0; font: 600 18.500px/32px "Open Sans", sans-serif; letter-spacing: 0; height: 30px; }
.stats { display: grid; grid-template-columns: repeat(4, 1fr); gap: 37px; }
.card { height: 140px; background: #fff; padding: 31px 30px 0; display: flex; justify-content: space-between; color: #009688; }
.card strong { display: block; font-weight: 400; font-size: 37.500px; line-height: 42px; }
.card small { display: block; font-size: 17.500px; line-height: 32px; white-space: nowrap; }
.card svg { width: 30px; height: 30px; margin-top: 22px; fill: none; stroke: #009688; stroke-width: 2; stroke-linecap: round; stroke-linejoin: round; }
.charts { display: grid; grid-template-columns: 727px 728px; justify-content: space-between; margin-top: 37px; }
section { background: #fff; height: 516px; overflow: hidden; }
h3 { margin: 0; height: 68px; border-bottom: 1px solid #e6e6e6; padding-left: 30px; font-weight: 400; font-size: 22.500px; line-height: 66px; color: #222; }
.ax text { font-size: 15px; fill: #888; }
.tip text { font-size: 15px; }
.end { text-anchor: end; }
.mid { text-anchor: middle; }
.ln { fill: none; stroke-width: 3.700; }
.big { font-family: Inter, "Liberation Sans", sans-serif; font-weight: 900; font-size: 31.500px; fill: #009688; }
.num { font-size: 38px; text-anchor: middle; fill: #009688; }
.scroll { width: 21px; background: #f1f1f1; display: flex; flex-direction: column; align-items: center; padding-top: 9px; }
.scroll div { width: 17px; height: 536px; margin-top: 6px; background: #c1c1c1; }
.scroll .dn { margin-top: auto; margin-bottom: 7px; }

.taskbar { height: 60px; flex: none; background: #202023; border-top: 1px solid #3c4044; display: flex; align-items: center; padding-left: 27px; color: #fff; }
.wx { margin: 0 0 2px 11px; width: 438px; display: flex; flex-direction: column; font-size: 14.500px; line-height: 20px; letter-spacing: -.15px; }
.wx b { font-weight: 400; }
.wx span { color: #c8c8ca; }
.srch { width: 274px; height: 40px; margin-left: 16px; border-radius: 20px; background: #3d3d40; border: 1px solid #505053; display: flex; align-items: center; padding-left: 14px; font-size: 17px; letter-spacing: -.3px; color: #dadadc; }
.srch span { margin-left: 11px; flex: 1; }
.srch div { width: 66px; height: 34px; margin-right: 2px; border-radius: 17px; background: #535356; display: flex; align-items: center; justify-content: center; }
.apps { display: flex; gap: 5px; margin-left: 6px; }
.apps div { width: 50px; height: 50px; display: flex; align-items: center; justify-content: center; position: relative; }
.apps svg { width: 30px; height: 30px; }
.apps .cur { background: #2f2e33; border: 1px solid #39383d; border-radius: 5px; }
.apps .run::after, .apps .cur::after { content: ""; position: absolute; bottom: 1px; left: 21px; width: 8px; height: 4px; border-radius: 2px; background: #9a9a9c; }
.apps .cur::after { left: 14px; width: 20px; bottom: 0; background: #f4826a; }
.apps .face { position: absolute; width: 20px; height: 21px; left: 26px; top: 4px; }
.tray { margin-left: auto; }
.clock { width: 90px; margin: 0 24px 2px -11px; display: flex; flex-direction: column; text-align: right; font-size: 15px; line-height: 20px; letter-spacing: -.2px; }
```
